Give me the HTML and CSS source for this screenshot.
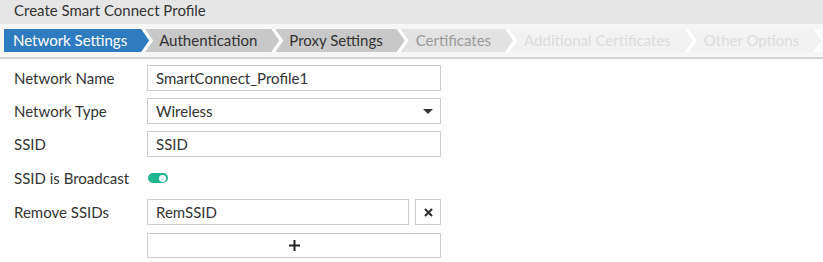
FILE: index.html
```html
<!DOCTYPE html>
<html lang="en">
    <head>
        <meta charset="UTF-8">
        <title>Create Smart Connect Profile</title>
        <link rel="stylesheet" href="styles.css">
    </head>

    <body>

        <div class="title_bar">Create Smart Connect Profile</div>

        <div class="steps_band">
            <div class="steps">
                <div class="step step_active">Network Settings</div>
                <div class="step step_done">Authentication</div>
                <div class="step step_done">Proxy Settings</div>
                <div class="step step_next">Certificates</div>
                <div class="step step_off">Additional Certificates</div>
                <div class="step step_off">Other Options</div>
            </div>
        </div>

        <div class="form">

            <div class="row">
                <label class="label">Network Name</label>
                <div class="field">SmartConnect_Profile1</div>
            </div>

            <div class="row">
                <label class="label">Network Type</label>
                <div class="field select">
                    <span>Wireless</span>
                    <span class="caret"></span>
                </div>
            </div>

            <div class="row">
                <label class="label">SSID</label>
                <div class="field">SSID</div>
            </div>

            <div class="row row_toggle">
                <label class="label">SSID is Broadcast</label>
                <div class="toggle"><div class="knob"></div></div>
            </div>

            <div class="row">
                <label class="label">Remove SSIDs</label>
                <div class="field_group">
                    <div class="field field_short">RemSSID</div>
                    <button class="icon_btn">
                        <svg width="9" height="9" viewBox="0 0 9 9">
                            <path d="M1 1 L8 8 M8 1 L1 8" stroke="#333333" stroke-width="2.2"/>
                        </svg>
                    </button>
                </div>
            </div>

            <div class="row">
                <span class="label"></span>
                <button class="add_btn">
                    <svg width="11" height="11" viewBox="0 0 11 11">
                        <path d="M5.5 0 V11 M0 5.5 H11" stroke="#222222" stroke-width="2"/>
                    </svg>
                </button>
            </div>

        </div>

    </body>
</html>
```

FILE: styles.css
```css
body {
    margin: 0;
    font-family: Lato, "Open Sans", sans-serif;
    font-size: 15px;
    color: #333333;
    background-color: #ffffff;
    overflow: hidden; /* Hide scrollbars */
}

.title_bar {
    height: 24px;
    line-height: 21px;
    padding-left: 14px;
    background-color: #e6e6e6;
    color: #333333;
}

.steps_band {
    background-color: #f6f6f6;
    padding: 5px 4px;
    border-bottom: 2px solid #d4d4d4;
    height: 23px;
}

.steps {
    display: inline-flex;
    background-color: #ffffff;
    height: 23px;
}

.step {
    height: 23px;
    line-height: 23px;
    padding: 0 22px 0 14px;
    margin-left: -4px;
    white-space: nowrap;
    clip-path: polygon(0 0, calc(100% - 8px) 0, 100% 50%, calc(100% - 8px) 100%, 0 100%, 8px 50%);
}

.step_active {
    margin-left: 0;
    padding-left: 9px;
    background-color: #2f7bbf;
    color: #ffffff;
    clip-path: polygon(0 0, calc(100% - 8px) 0, 100% 50%, calc(100% - 8px) 100%, 0 100%);
}

.step_done {
    background-color: #c8c8c8;
    color: #333333;
}

.step_next {
    padding-left: 15px;
    background-color: #e2e2e2;
    color: #9a9a9a;
}

.step_off {
    padding-left: 15px;
    background-color: #f2f2f2;
    color: #dcdcdc;
}

.form {
    padding: 6px 0 0 14px;
}

.row {
    display: flex;
    align-items: center;
    height: 26px;
    margin-bottom: 7px;
}

.row_toggle {
    height: 28px;
}

.label {
    width: 133px;
}

.field {
    box-sizing: border-box;
    width: 294px;
    height: 26px;
    line-height: 24px;
    padding: 0 8px;
    border: 1px solid #cccccc;
    color: #333333;
}

.select {
    display: flex;
    justify-content: space-between;
    align-items: center;
}

.caret {
    width: 0;
    height: 0;
    border-left: 5px solid transparent;
    border-right: 5px solid transparent;
    border-top: 5px solid #333333;
    margin-right: -1px;
}

.toggle {
    box-sizing: border-box;
    width: 20px;
    height: 10px;
    margin-left: 1px;
    border-radius: 5px;
    background-color: #1db690;
    display: flex;
    justify-content: flex-end;
    align-items: center;
    padding-right: 2px;
}

.knob {
    width: 7px;
    height: 7px;
    border-radius: 50%;
    background-color: #ffffff;
}

.field_group {
    display: flex;
    gap: 6px;
}

.field_short {
    width: 262px;
}

.icon_btn {
    box-sizing: border-box;
    width: 26px;
    height: 26px;
    padding: 0;
    border: 1px solid #cccccc;
    background-color: #ffffff;
    display: flex;
    align-items: center;
    justify-content: center;
}

.add_btn {
    box-sizing: border-box;
    width: 294px;
    height: 25px;
    padding: 0;
    border: 1px solid #cccccc;
    background-color: #ffffff;
    display: flex;
    align-items: center;
    justify-content: center;
}
```
